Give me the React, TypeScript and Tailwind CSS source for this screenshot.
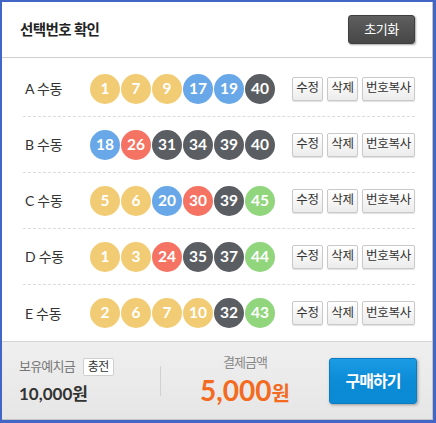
import React from "react";

const Y = "bg-[#f2cc74]";
const B = "bg-[#68a7e8]";
const R = "bg-[#f57363]";
const D = "bg-[#5a5d62]";
const G = "bg-[#91d57d]";

function color(n: number) {
  if (n <= 10) return Y;
  if (n <= 20) return B;
  if (n <= 30) return R;
  if (n <= 40) return D;
  return G;
}

const rows: { label: string; nums: number[] }[] = [
  { label: "A", nums: [1, 7, 9, 17, 19, 40] },
  { label: "B", nums: [18, 26, 31, 34, 39, 40] },
  { label: "C", nums: [5, 6, 20, 30, 39, 45] },
  { label: "D", nums: [1, 3, 24, 35, 37, 44] },
  { label: "E", nums: [2, 6, 7, 10, 32, 43] },
];

const font = { fontFamily: "Lato, 'Noto Sans CJK KR', sans-serif" };

function SmallBtn({ children, w }: { children: React.ReactNode; w: string }) {
  return (
    <button
      className={`${w} h-[24px] flex items-center justify-center rounded-[2px] border border-[#c9c9c9] bg-gradient-to-b from-white to-[#ececec] text-[12.5px] text-[#333] tracking-[-0.3px] shadow-[0_1px_1px_rgba(0,0,0,0.12)]`}
    >
      {children}
    </button>
  );
}

export default function App() {
  return (
    <div
      className="w-[436px] h-[423px] bg-white border-t-2 border-l-2 border-r-[3px] border-b-[3px] border-[#4166c6] flex flex-col overflow-hidden"
      style={font}
    >
      <div className="flex-1 flex flex-col border-r border-b border-[#c4c4c4] min-h-0">
        {/* header */}
        <div className="h-[56px] shrink-0 flex items-center justify-between pl-[18px] pr-[17px] border-b border-[#cfcfcf]">
          <div className="text-[14.5px] font-bold text-[#222] tracking-[-0.6px]">선택번호 확인</div>
          <button className="w-[67px] h-[29px] rounded-[3px] bg-gradient-to-b from-[#5f5f5f] via-[#525252] to-[#474747] text-white text-[13px] tracking-[-0.5px] shadow-[1px_1px_2px_rgba(0,0,0,0.35)] border border-[#3f3f3f]">
            초기화
          </button>
        </div>
        {/* rows */}
        <div className="flex flex-col pl-[21px] pr-[17px] pt-[3px]">
          {rows.map((r, i) => (
            <div
              key={r.label}
              className={`h-[56px] flex items-center ${i < rows.length - 1 ? "border-b border-dashed border-[#dcdcdc]" : ""}`}
            >
              <div className="w-[67px] pl-[2px] text-[14px] text-[#333] tracking-[-0.3px]">
                {r.label} 수동
              </div>
              <div className="flex gap-[1px]">
                {r.nums.map((n, j) => (
                  <div
                    key={j}
                    className={`w-[30px] h-[30px] rounded-full ${color(n)} flex items-center justify-center text-white font-bold text-[15.5px]`}
                    style={{ fontFamily: "Lato, sans-serif" }}
                  >
                    {n}
                  </div>
                ))}
              </div>
              <div className="ml-auto flex gap-[4px]">
                <SmallBtn w="w-[31px]">수정</SmallBtn>
                <SmallBtn w="w-[31px]">삭제</SmallBtn>
                <SmallBtn w="w-[53px]">번호복사</SmallBtn>
              </div>
            </div>
          ))}
        </div>
        {/* footer */}
        <div className="mt-auto h-[78px] shrink-0 border-t border-[#d4d4d4] bg-gradient-to-b from-[#efefef] to-[#e6e6e6] flex items-center pl-[17px] pr-[15px]">
          <div className="w-[140px] flex flex-col">
            <div className="flex items-center gap-[8px] h-[20px]">
              <span className="text-[13px] text-[#777] tracking-[-0.8px]">보유예치금</span>
              <span className="w-[31px] h-[18px] flex items-center justify-center bg-white border border-[#cfcfcf] rounded-[2px] text-[12px] text-[#333] tracking-[-0.5px]">
                충전
              </span>
            </div>
            <div className="mt-[6px] text-[17px] font-bold text-[#333] leading-[22px]">
              10,000<span className="tracking-[-1px]">원</span>
            </div>
          </div>
          <div className="w-px h-[30px] bg-[#d0d0d0] ml-[1px]" />
          <div className="flex-1 flex flex-col items-center">
            <div className="text-[13px] text-[#888] tracking-[-1px] h-[20px] flex items-center">결제금액</div>
            <div className="mt-[2px] text-[#f36a21] font-bold leading-[30px] flex items-baseline">
              <span className="text-[28px]">5,000</span>
              <span className="text-[20px]">원</span>
            </div>
          </div>
          <button className="w-[88px] h-[46px] rounded-[3px] bg-gradient-to-b from-[#1a9ce4] via-[#0c8bd6] to-[#0a8ad3] border border-[#0b7cc2] text-white text-[16px] font-bold tracking-[-1px] shadow-[1px_1px_3px_rgba(0,0,0,0.35)]">
            구매하기
          </button>
        </div>
      </div>
    </div>
  );
}
